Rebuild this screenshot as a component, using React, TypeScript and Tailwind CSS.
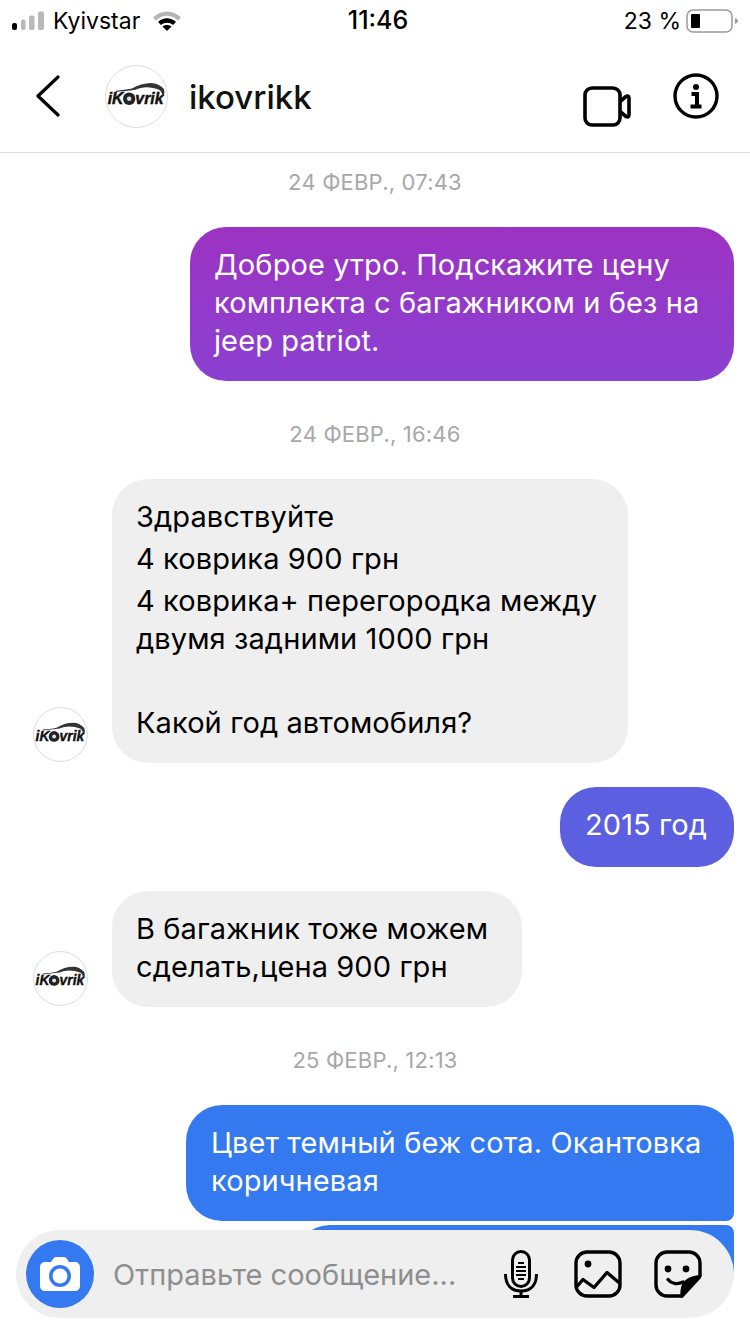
import type { ReactNode } from "react";

function Logo({ size }: { size: number }) {
  return (
    <div
      className="shrink-0 rounded-full border border-[#dcdcdc] bg-white flex items-center justify-center"
      style={{ width: size, height: size }}
    >
      <svg viewBox="0 0 54 54" width={size - 2} height={size - 2}>
        <path
          d="M9 22c5-.5 9-1 14-2 5-3 11-5 17-5 4 0 8 2 11 5 1 2 1 4 0 6l-1 1c0-2-1-5-3-6-7-3-15-3-21 0-6 1-11 1-17 2z"
          fill="#333"
        />
        <circle cx="20.500" cy="29" r="5.500" fill="#222" />
        <circle cx="20.500" cy="29" r="2" fill="#ddd" />
        <text
          x="1.500"
          y="34"
          fontFamily="'Liberation Sans', sans-serif"
          fontStyle="italic"
          fontWeight="700"
          fontSize="14"
          fill="#111"
          stroke="#111"
          strokeWidth=".4"
        >
          iK
        </text>
        <text
          x="26"
          y="34"
          fontFamily="'Liberation Sans', sans-serif"
          fontStyle="italic"
          fontWeight="700"
          fontSize="14"
          fill="#111"
          stroke="#111"
          strokeWidth=".4"
        >
          vrik
        </text>
      </svg>
    </div>
  );
}

function DateLabel({ children, className }: { children: ReactNode; className: string }) {
  return (
    <div className={`text-center text-[22px] leading-[26px] tracking-[0.2px] text-[#a8a8a8] ${className}`}>
      {children}
    </div>
  );
}

function StatusBar() {
  return (
    <div className="h-[42px] flex items-center justify-between pl-[12px] pr-[12px] text-[23px] text-black">
      <div className="flex items-center w-[260px]">
        <svg width="33" height="20" viewBox="0 0 33 20">
          <rect x="0" y="12" width="5" height="7" rx="2" fill="#000" />
          <rect x="9" y="8.500" width="4.500" height="10.500" rx="2" fill="#b9b9b9" />
          <rect x="17" y="4.500" width="5.500" height="14.500" rx="2" fill="#b9b9b9" />
          <rect x="26" y="0.500" width="6" height="18.500" rx="2" fill="#b9b9b9" />
        </svg>
        <span className="ml-[8px]">Kyivstar</span>
        <svg className="ml-[13px]" width="28" height="20" viewBox="0 0 28 20">
          <path d="M0 6.500C8-1.500 20-1.500 28 6.500l-3 3C18.500 3 9.500 3 3 9.500z" fill="#b5b5b5" />
          <path d="M5 11c5.500-5 12.500-5 18 0l-3 3c-3.500-3-8.500-3-12 0z" fill="#000" />
          <path d="M9.500 15.500c2.500-2 6.500-2 9 0L14 20z" fill="#000" />
        </svg>
      </div>
      <span className="ml-[6px] text-[25px] font-medium">11:46</span>
      <div className="flex items-center justify-end w-[260px]">
        <span className="text-[23px]">23 %</span>
        <svg className="ml-[5px]" width="52" height="24" viewBox="0 0 52 24">
          <rect x="1" y="1" width="45" height="22" rx="6" fill="none" stroke="#9a9a9a" strokeWidth="1.500" />
          <rect x="5" y="5" width="9" height="14" rx="1" fill="#000" />
          <path d="M49 9c2 1 3 2 3 3s-1 2-3 3z" fill="#9a9a9a" />
        </svg>
      </div>
    </div>
  );
}

function Header() {
  return (
    <div className="h-[111px] flex items-center pl-[36px] pr-[31px] border-b border-[#dbdbdb]">
      <svg className="mb-[3px]" width="24" height="42" viewBox="0 0 24 42" fill="none">
        <path d="M22 2 2 21l20 19" stroke="#000" strokeWidth="3.200" strokeLinecap="round" strokeLinejoin="round" />
      </svg>
      <div className="ml-[45px] mb-[2px]">
        <Logo size={63} />
      </div>
      <span className="ml-[21px] mt-[2px] text-[33px] font-medium text-[#111]">ikovrikk</span>
      <div className="ml-auto mt-[5px] flex items-start">
        <svg className="mt-[13px]" width="48" height="41" viewBox="0 0 48 41" fill="none" stroke="#000" strokeWidth="3.600">
          <rect x="2" y="2" width="35" height="37" rx="7" />
          <path d="M37 15.500 43 10.500c1.500-1 3-.5 3 1.500v17c0 2-1.500 2.500-3 1.500L37 25.500" strokeLinejoin="round" />
        </svg>
        <svg className="ml-[42px]" width="46" height="46" viewBox="0 0 46 46" fill="none">
          <circle cx="23" cy="23" r="21" stroke="#000" strokeWidth="3.400" />
          <circle cx="23" cy="14" r="3" fill="#000" />
          <path d="M18.500 21H24v12M17.500 33.500h11" stroke="#000" strokeWidth="4" />
        </svg>
      </div>
    </div>
  );
}

function Incoming({ children, className }: { children: ReactNode; className: string }) {
  return (
    <div className={`flex items-end pl-[33px] ${className}`}>
      <div className="mb-px">
        <Logo size={55} />
      </div>
      <div className="ml-[24px] rounded-[36px] bg-[#efefef] px-[24px] pt-[19px] pb-[21px] text-black">
        {children}
      </div>
    </div>
  );
}

function Outgoing({ children, className }: { children: ReactNode; className: string }) {
  return <div className={`ml-auto mr-[16px] w-fit text-white ${className}`}>{children}</div>;
}

function Composer() {
  return (
    <div className="absolute left-[16px] top-[1230px] w-[718px] h-[88px] rounded-[44px] bg-[#efefef] flex items-center pl-[10px]">
      <div className="w-[68px] h-[68px] rounded-full bg-[#3579f0] flex items-center justify-center">
        <svg width="40" height="36" viewBox="0 0 40 36">
          <path
            d="M5 6h6l2-3c.6-1 1.500-2 3-2h8c1.500 0 2.400 1 3 2l2 3h6c2.500 0 5 2 5 5v19c0 3-2.500 5-5 5H5c-2.500 0-5-2-5-5V11c0-3 2.500-5 5-5z"
            fill="#fff"
          />
          <circle cx="20" cy="20" r="11" fill="#3579f0" />
          <circle cx="20" cy="20" r="7.500" fill="#fff" />
        </svg>
      </div>
      <span className="ml-[19px] mt-[2px] text-[29px] text-[#8e8e8e]">Отправьте сообщение...</span>
      <div className="ml-auto mr-[32px] flex items-center">
        <svg width="34" height="48" viewBox="0 0 34 48" fill="none" stroke="#000">
          <rect x="8.500" y="1.500" width="17" height="35" rx="8.500" strokeWidth="3" />
          <path d="M14 13h6M12 17h10M12 21h10M12 25h10M14 29h6" strokeWidth="2" />
          <path d="M1.500 24c0 11 6 17 15.500 17s15.500-6 15.500-17" strokeWidth="3" />
          <path d="M17 41v5M9 46.500h16" strokeWidth="3" />
        </svg>
        <svg className="ml-[36px]" width="48" height="48" viewBox="0 0 48 48" fill="none" stroke="#000" strokeWidth="3.400">
          <rect x="2" y="2" width="44" height="44" rx="11" />
          <circle cx="14" cy="14" r="3.400" fill="#000" stroke="none" />
          <path d="M2.500 37 9 29.500l11 8 13-15 13 11" strokeLinejoin="round" />
        </svg>
        <svg className="ml-[32px]" width="48" height="48" viewBox="0 0 48 48" fill="none">
          <path
            d="M29 46H13C7 46 2 41 2 35V13C2 7 7 2 13 2h22c6 0 11 5 11 11v14"
            stroke="#000"
            strokeWidth="3.400"
          />
          <path d="M47 25v3L29 47.500h-2c-1-2-1-8 1-13 3-6 11-9.500 19-9.500z" fill="#000" />
          <circle cx="14" cy="19" r="3.400" fill="#000" />
          <circle cx="32" cy="19" r="3.400" fill="#000" />
          <path d="M14 29.500c3 4 9 5.500 15 2.500" stroke="#000" strokeWidth="3.400" strokeLinecap="round" />
        </svg>
      </div>
    </div>
  );
}

export default function App() {
  return (
    <div className="relative w-[750px] h-[1334px] overflow-hidden bg-white font-['Inter',sans-serif]">
      <StatusBar />
      <Header />

      <div className="text-[29px] leading-[38px] tracking-[0.1px]">
        <DateLabel className="mt-[16px]">24 ФЕВР., 07:43</DateLabel>
        <Outgoing className="mt-[32px]">
          <div className="w-[544px] h-[154px] rounded-[36px] bg-gradient-to-b from-[#9c32c2] to-[#8a40d2] px-[24px] py-[19px]">
            Доброе утро. Подскажите цену
            <br />
            комплекта с багажником и без на
            <br />
            jeep patriot.
          </div>
        </Outgoing>

        <DateLabel className="mt-[40px]">24 ФЕВР., 16:46</DateLabel>
        <Incoming className="mt-[32px]">
          <div className="w-[468px]">
            <p>Здравствуйте</p>
            <p className="mt-[4px]">4 коврика 900 грн</p>
            <p className="mt-[4px]">
              4 коврика+ перегородка между
              <br />
              двумя задними 1000 грн
            </p>
            <p className="mt-[4px] h-[38px]" />
            <p className="mt-[4px]">Какой год автомобиля?</p>
          </div>
        </Incoming>

        <Outgoing className="mt-[24px]">
          <div className="w-[174px] h-[80px] rounded-[36px] bg-[#5b5fe0] px-[25px] py-[19px]">2015 год</div>
        </Outgoing>

        <Incoming className="mt-[24px]">
          <div className="w-[362px]">
            В багажник тоже можем
            <br />
            сделать,цена 900 грн
          </div>
        </Incoming>

        <DateLabel className="mt-[40px]">25 ФЕВР., 12:13</DateLabel>
        <Outgoing className="mt-[32px]">
          <div className="w-[548px] h-[116px] rounded-[36px] rounded-br-[8px] bg-[#3579f0] px-[25px] py-[19px]">
            Цвет темный беж сота. Окантовка
            <br />
            коричневая
          </div>
        </Outgoing>
        <Outgoing className="mt-[4px]">
          <div className="w-[440px] h-[80px] rounded-[36px] rounded-tr-[8px] bg-[#3579f0]" />
        </Outgoing>
      </div>

      <Composer />
    </div>
  );
}
